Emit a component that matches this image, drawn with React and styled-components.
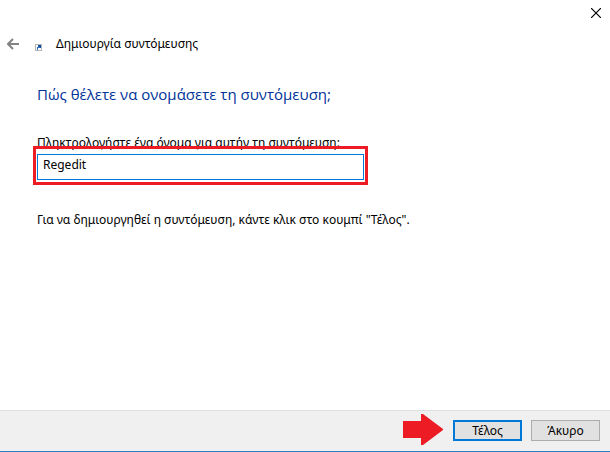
import React, { useState } from "react";
import styled, { createGlobalStyle } from "styled-components";

const GlobalStyle = createGlobalStyle`
  * {
    box-sizing: border-box;
  }

  body {
    margin: 0;
    color: #000;
    background: #fff;
    font-family: "Noto Sans", "Open Sans", sans-serif;
    font-size: 12px;
    line-height: 16px;
  }
`;

const Window = styled.div`
  display: flex;
  flex-direction: column;
  min-height: 100vh;
  background: #fff;
  border-bottom: 1px solid #2a7fc4;
`;

const TitleBar = styled.div`
  display: flex;
  justify-content: flex-end;
  height: 28px;
  padding: 4px 5px;
`;

const IconButton = styled.button`
  display: flex;
  align-items: center;
  justify-content: center;
  width: 18px;
  height: 18px;
  padding: 0;
  border: none;
  background: transparent;
  color: ${({ $color }) => $color};
`;

const Header = styled.header`
  display: flex;
  align-items: center;
  height: 32px;
  padding: 0 4px;
`;

const ShortcutIcon = styled.svg`
  width: 7px;
  height: 7px;
  margin: 7px 14px 0 13px;
`;

const Content = styled.main`
  flex: 1;
  padding: 22px 37px;
`;

const Heading = styled.h1`
  margin: 0 0 29px;
  color: #003399;
  font-family: "Open Sans", "Noto Sans", sans-serif;
  font-size: 15px;
  font-weight: 400;
  line-height: 24px;
`;

const Label = styled.label`
  display: block;
  padding-bottom: 3px;
`;

const Field = styled.div`
  position: relative;
  max-width: 327px;
  margin-bottom: 32px;
`;

const NameInput = styled.input`
  display: block;
  width: 100%;
  height: 26px;
  padding: 0 5px 6px;
  border: 1px solid #0078d7;
  border-radius: 0;
  outline: none;
  background: #fff;
  color: #000;
  font: inherit;
`;

const Highlight = styled.div`
  position: absolute;
  inset: -8px -4px -5px;
  border: 3px solid #ed1c24;
  pointer-events: none;
`;

const Hint = styled.p`
  margin: 0;
`;

const Footer = styled.footer`
  display: flex;
  align-items: center;
  justify-content: flex-end;
  gap: 9px;
  height: 41px;
  padding: 0 10px 2px 0;
  border-top: 1px solid #dfdfdf;
  background: #f0f0f0;
`;

const PointerArrow = styled.svg`
  width: 41px;
  height: 32px;
`;

const DialogButton = styled.button`
  width: 69px;
  height: 21px;
  padding: 1px 0 0;
  border: ${({ $primary }) =>
    $primary ? "2px solid #0078d7" : "1px solid #adadad"};
  border-radius: 0;
  background: #e1e1e1;
  color: #000;
  font: inherit;
`;

function App() {
  const [name, setName] = useState("Regedit");

  return (
    <>
      <GlobalStyle />
      <Window>
        <TitleBar>
          <IconButton type="button" aria-label="Κλείσιμο" $color="#000">
            <svg width="10" height="10" viewBox="0 0 10 10" fill="none">
              <path d="M0 0L10 10M10 0L0 10" stroke="currentColor" strokeWidth="1.2" />
            </svg>
          </IconButton>
        </TitleBar>
        <Header>
          <IconButton type="button" aria-label="Πίσω" $color="#838383">
            <svg width="12" height="12" viewBox="0 0 12 12" fill="none">
              <path d="M6 1L1 6L6 11M1 6H12" stroke="currentColor" strokeWidth="2" />
            </svg>
          </IconButton>
          <ShortcutIcon viewBox="0 0 7 7">
            <rect x="0.5" y="0.5" width="6" height="6" fill="#fbfbfb" stroke="#b9b9b9" />
            <path d="M3 1H6V4H5V3H4V2H3Z" fill="#0f4a9c" />
            <path d="M3 2H4V3H5V4H3V6H2V3H3Z" fill="#2f6fc0" />
          </ShortcutIcon>
          <span>Δημιουργία συντόμευσης</span>
        </Header>
        <Content>
          <Heading>Πώς θέλετε να ονομάσετε τη συντόμευση;</Heading>
          <Label htmlFor="shortcut-name">
            Πληκτρολογήστε ένα όνομα για αυτήν τη συντόμευση:
          </Label>
          <Field>
            <NameInput
              id="shortcut-name"
              type="text"
              value={name}
              onChange={(e) => setName(e.target.value)}
            />
            <Highlight />
          </Field>
          <Hint>
            Για να δημιουργηθεί η συντόμευση, κάντε κλικ στο κουμπί "Τέλος".
          </Hint>
        </Content>
        <Footer>
          <PointerArrow viewBox="0 0 41 32" fill="#ed1c24" aria-hidden="true">
            <path d="M0 7H18V0H20L40 15V16L20 31H18V24H0Z" />
          </PointerArrow>
          <DialogButton type="button" $primary>
            Τέλος
          </DialogButton>
          <DialogButton type="button">Άκυρο</DialogButton>
        </Footer>
      </Window>
    </>
  );
}

export default App;
